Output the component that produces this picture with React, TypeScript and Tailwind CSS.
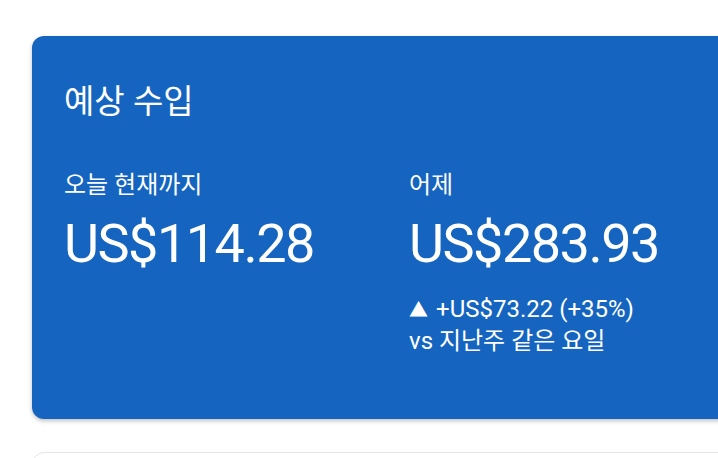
import React from "react";

export default function App() {
  return (
    <div
      className="w-[718px] h-[458px] overflow-hidden bg-white pt-[36px] pl-[32px]"
      style={{ fontFamily: 'Roboto, "Noto Sans CJK KR", sans-serif' }}
    >
      <div className="w-[740px] h-[383px] rounded-[12px] bg-[#1565c0] text-white shadow-[0_2px_4px_rgba(0,0,0,0.25)] pl-[32px] pt-[48px]">
        <div className="text-[33px] leading-[36px]">예상 수입</div>
        <div className="flex mt-[49px]">
          <div className="w-[345px]">
            <div className="text-[24px] leading-[32px]">오늘 현재까지</div>
            <div className="text-[54px] leading-[64px] mt-[11px] tracking-[-1.5px]">US$114.28</div>
          </div>
          <div>
            <div className="text-[24px] leading-[32px]">어제</div>
            <div className="text-[54px] leading-[64px] mt-[11px] tracking-[-1.5px]">US$283.93</div>
            <div className="text-[24px] leading-[30px] mt-[18px]">
              <span className="text-[19px] mr-[8px]">▲</span>+US$73.22 (+35%)
            </div>
            <div className="text-[24px] leading-[30px]">vs 지난주 같은 요일</div>
          </div>
        </div>
      </div>
      <div className="w-[740px] h-[40px] mt-[33px] rounded-[12px] border border-[#e5e5e5] bg-white" />
    </div>
  );
}
